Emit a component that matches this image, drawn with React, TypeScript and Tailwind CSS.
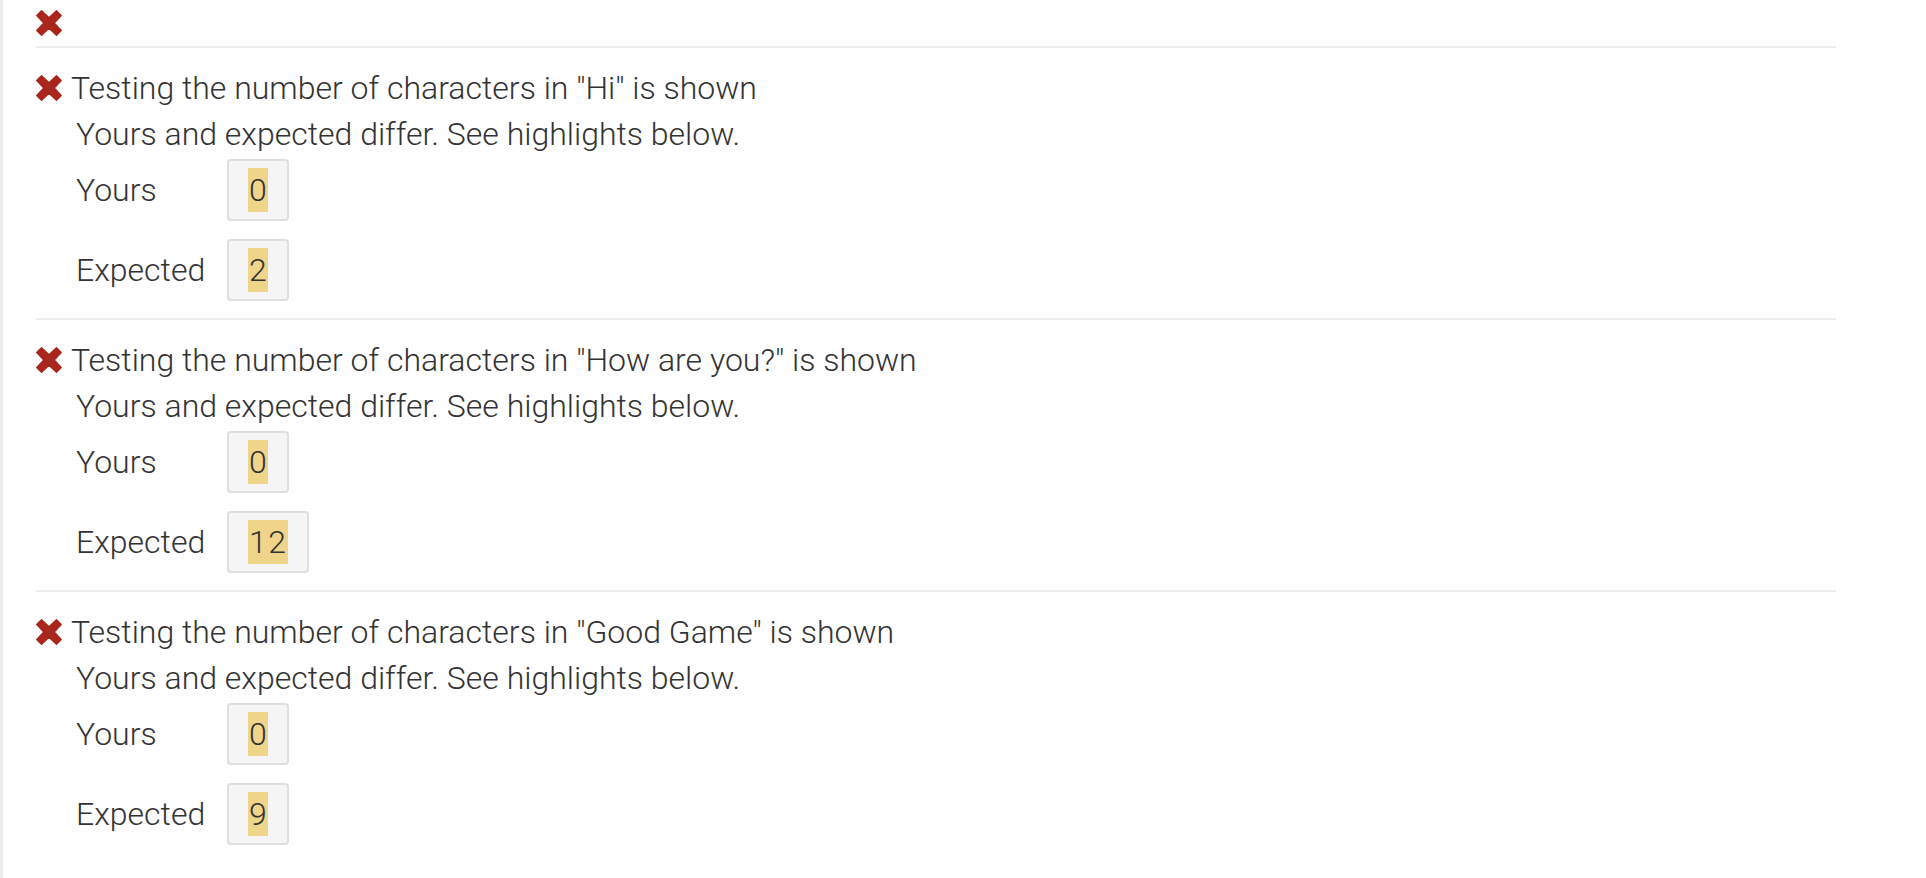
import React from "react";

function XIcon() {
  return (
    <svg width="26" height="26" viewBox="0 0 26 26" className="shrink-0">
      <path
        d="M5.5 0.8 L13 7.8 L20.5 0.8 L25.2 5.5 L18.2 13 L25.2 20.5 L20.5 25.2 L13 18.2 L5.5 25.2 L0.8 20.5 L7.8 13 L0.8 5.5 Z"
        fill="#a9261c"
        stroke="#a9261c"
        strokeWidth="1.4"
        strokeLinejoin="round"
      />
    </svg>
  );
}

function CodeBox({ value }: { value: string }) {
  return (
    <div className="rounded-[4px] border-2 border-[#dedede] bg-[#f5f5f5] px-[19px] py-[7px]">
      <span className="block bg-[#efd58a] pl-[1px] text-[32px] font-light leading-[44px] tracking-[1.5px] text-[#333] tabular-nums">
        {value}
      </span>
    </div>
  );
}

function Section({ text, yours, expected }: { text: string; yours: string; expected: string }) {
  return (
    <div className="pt-[17px] pb-[17px]">
      <div className="flex h-[46px] items-center gap-[9px]">
        <XIcon />
        <span>{text}</span>
      </div>
      <div className="h-[46px] pl-[40px] leading-[46px]">Yours and expected differ. See highlights below.</div>
      <div className="mt-[2px] flex items-center pl-[40px]">
        <div className="w-[151px]">Yours</div>
        <div className="flex">
          <CodeBox value={yours} />
        </div>
      </div>
      <div className="mt-[18px] flex items-center pl-[40px]">
        <div className="w-[151px]">Expected</div>
        <div className="flex">
          <CodeBox value={expected} />
        </div>
      </div>
    </div>
  );
}

export default function App() {
  return (
    <div
      className="flex min-h-screen bg-white text-[32px] font-light text-[#333]"
      style={{ fontFamily: 'Roboto, "Liberation Sans", sans-serif' }}
    >
      <div className="w-[3px] shrink-0 bg-[#ebebeb]" />
      <div className="ml-[33px] w-[1800px]">
        <div className="flex h-[46px] items-center">
          <XIcon />
        </div>
        <div className="h-[2px] bg-[#eeeeee]" />
        <Section text={'Testing the number of characters in "Hi" is shown'} yours="0" expected="2" />
        <div className="h-[2px] bg-[#eeeeee]" />
        <Section text={'Testing the number of characters in "How are you?" is shown'} yours="0" expected="12" />
        <div className="h-[2px] bg-[#eeeeee]" />
        <Section text={'Testing the number of characters in "Good Game" is shown'} yours="0" expected="9" />
      </div>
    </div>
  );
}
